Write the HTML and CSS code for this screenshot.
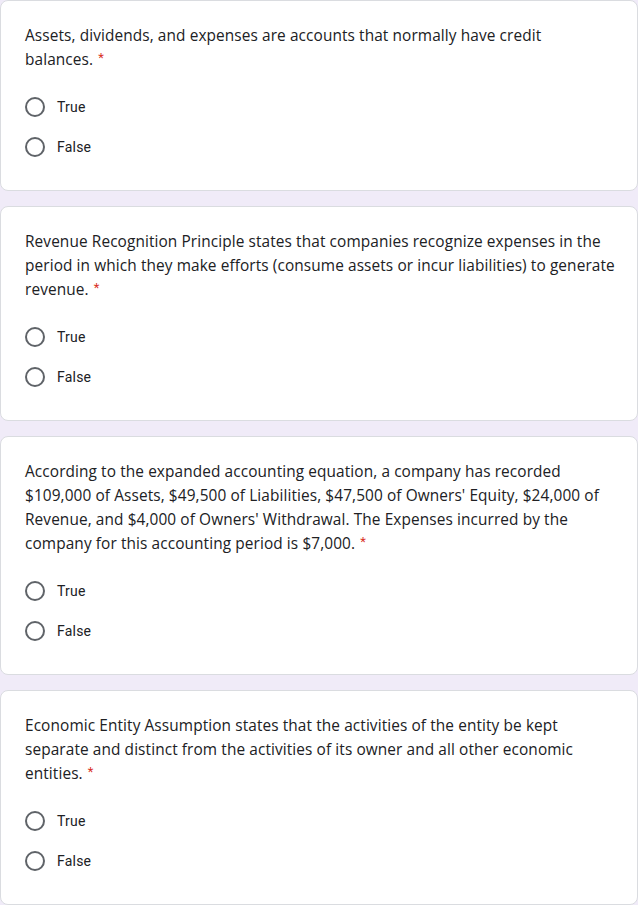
FILE: index.html
```html
<!DOCTYPE html>
<html>
<head>
<meta charset="utf-8">
<link rel="stylesheet" href="styles.css">
</head>
<body>
<div class="form">
  <div class="card">
    <div class="q">Assets, dividends, and expenses are accounts that normally have credit<br>balances. <span class="req">*</span></div>
    <div class="opts">
      <label class="opt"><span class="radio"></span><span class="lbl">True</span></label>
      <label class="opt"><span class="radio"></span><span class="lbl">False</span></label>
    </div>
  </div>
  <div class="card">
    <div class="q">Revenue Recognition Principle states that companies recognize expenses in the<br>period in which they make efforts (consume assets or incur liabilities) to generate<br>revenue. <span class="req">*</span></div>
    <div class="opts">
      <label class="opt"><span class="radio"></span><span class="lbl">True</span></label>
      <label class="opt"><span class="radio"></span><span class="lbl">False</span></label>
    </div>
  </div>
  <div class="card">
    <div class="q">According to the expanded accounting equation, a company has recorded<br>$109,000 of Assets, $49,500 of Liabilities, $47,500 of Owners' Equity, $24,000 of<br>Revenue, and $4,000 of Owners' Withdrawal. The Expenses incurred by the<br>company for this accounting period is $7,000. <span class="req">*</span></div>
    <div class="opts">
      <label class="opt"><span class="radio"></span><span class="lbl">True</span></label>
      <label class="opt"><span class="radio"></span><span class="lbl">False</span></label>
    </div>
  </div>
  <div class="card">
    <div class="q">Economic Entity Assumption states that the activities of the entity be kept<br>separate and distinct from the activities of its owner and all other economic<br>entities. <span class="req">*</span></div>
    <div class="opts">
      <label class="opt"><span class="radio"></span><span class="lbl">True</span></label>
      <label class="opt"><span class="radio"></span><span class="lbl">False</span></label>
    </div>
  </div>
</div>
</body>
</html>
```
FILE: styles.css
```css
html, body {
  margin: 0;
  padding: 0;
  background: #f0ebf8;
}
.form {
  display: flex;
  flex-direction: column;
  gap: 15px;
  width: 638px;
}
.card {
  background: #fff;
  border: 1px solid #dadce0;
  border-radius: 8px;
  padding: 23px 24px 23px 24px;
  box-sizing: border-box;
  width: 638px;
}
.q {
  font-family: "Open Sans", sans-serif;
  font-size: 15.4px;
  line-height: 24px;
  height: auto;
  color: #202124;
  letter-spacing: 0.1px;
  white-space: nowrap;
}
.req {
  color: #d93025;
  font-family: "Roboto", sans-serif;
  font-size: 13px;
  line-height: 0;
  vertical-align: 3px;
  margin-left: 1px;
}
.opts {
  margin-top: 15px;
  display: flex;
  flex-direction: column;
}
.opt {
  display: flex;
  align-items: center;
  height: 40px;
}
.radio {
  width: 20px;
  height: 20px;
  box-sizing: border-box;
  border: 2px solid #5f6368;
  border-radius: 50%;
  flex: none;
}
.lbl {
  margin-left: 12px;
  font-family: "Roboto", sans-serif;
  font-size: 14px;
  color: #202124;
  letter-spacing: 0.2px;
}
```
